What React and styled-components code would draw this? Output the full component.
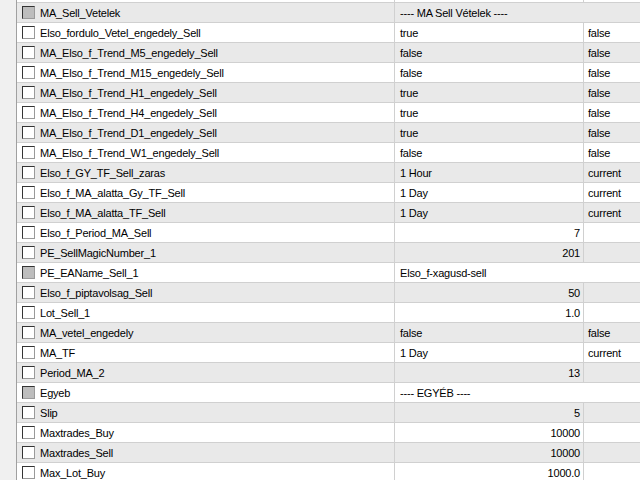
import React from "react";
import styled, { createGlobalStyle } from "styled-components";

const GlobalStyle = createGlobalStyle`
  html, body { margin: 0; padding: 0; background: #fff; }
  body {
    font-family: "Liberation Sans", Arial, sans-serif;
    font-size: 11px;
    letter-spacing: -0.2px;
    color: #000;
    overflow: hidden;
  }
`;

const Frame = styled.div`
  display: flex;
  width: 640px;
  height: 480px;
  overflow: hidden;
`;

const Gutter = styled.div`
  width: 16px;
  flex: none;
  background: #f0f0f0;
  border-right: 1px solid #a0a0a0;
`;

const Grid = styled.div`
  flex: 1;
  display: flex;
  flex-direction: column;
`;

const TopCut = styled.div`
  height: 2px;
  flex: none;
  background: #fff;
  display: flex;
`;

const TopCutCell = styled.div`
  width: ${(p) => p.$w}px;
  flex: ${(p) => (p.$w ? "none" : "1")};
  border-right: ${(p) => (p.$w ? "1px solid #d0d0d0" : "0")};
`;

const Row = styled.div`
  height: 19px;
  flex: none;
  display: flex;
  border-top: 1px solid #d0d0d0;
  background: ${(p) => (p.$alt ? "#e9e9e9" : "#fff")};
`;

const NameCell = styled.div`
  width: 372px;
  flex: none;
  display: flex;
  align-items: center;
  gap: 5px;
  padding: 1px 0 0 5px;
  border-right: 1px solid #d0d0d0;
  white-space: nowrap;
`;

const Check = styled.span`
  width: 11px;
  height: 11px;
  flex: none;
  margin-top: -1px;
  border: 1px solid;
  border-color: #333 #9a9a9a #9a9a9a #333;
  background: ${(p) => (p.$group ? "#bdbdbd" : "#fff")};
`;

const ValueCell = styled.div`
  width: ${(p) => (p.$span ? "auto" : "180px")};
  flex: ${(p) => (p.$span ? "1" : "none")};
  display: flex;
  align-items: center;
  justify-content: ${(p) => (p.$num ? "flex-end" : "flex-start")};
  padding: 1px 3px 0 5px;
  border-right: ${(p) => (p.$span ? "0" : "1px solid #d0d0d0")};
  white-space: nowrap;
`;

const StepCell = styled.div`
  flex: 1;
  display: flex;
  align-items: center;
  padding: 1px 0 0 4px;
  white-space: nowrap;
`;

const rows = [
  { name: "MA_Sell_Vetelek", value: "---- MA Sell Vételek ----", group: true },
  { name: "Elso_fordulo_Vetel_engedely_Sell", value: "true", step: "false" },
  { name: "MA_Elso_f_Trend_M5_engedely_Sell", value: "false", step: "false" },
  { name: "MA_Elso_f_Trend_M15_engedely_Sell", value: "false", step: "false" },
  { name: "MA_Elso_f_Trend_H1_engedely_Sell", value: "true", step: "false" },
  { name: "MA_Elso_f_Trend_H4_engedely_Sell", value: "true", step: "false" },
  { name: "MA_Elso_f_Trend_D1_engedely_Sell", value: "true", step: "false" },
  { name: "MA_Elso_f_Trend_W1_engedely_Sell", value: "false", step: "false" },
  { name: "Elso_f_GY_TF_Sell_zaras", value: "1 Hour", step: "current" },
  { name: "Elso_f_MA_alatta_Gy_TF_Sell", value: "1 Day", step: "current" },
  { name: "Elso_f_MA_alatta_TF_Sell", value: "1 Day", step: "current" },
  { name: "Elso_f_Period_MA_Sell", value: "7", num: true, step: "" },
  { name: "PE_SellMagicNumber_1", value: "201", num: true, step: "" },
  { name: "PE_EAName_Sell_1", value: "Elso_f-xagusd-sell", group: true },
  { name: "Elso_f_piptavolsag_Sell", value: "50", num: true, step: "" },
  { name: "Lot_Sell_1", value: "1.0", num: true, step: "" },
  { name: "MA_vetel_engedely", value: "false", step: "false" },
  { name: "MA_TF", value: "1 Day", step: "current" },
  { name: "Period_MA_2", value: "13", num: true, step: "" },
  { name: "Egyeb", value: "---- EGYÉB ----", group: true },
  { name: "Slip", value: "5", num: true, step: "" },
  { name: "Maxtrades_Buy", value: "10000", num: true, step: "" },
  { name: "Maxtrades_Sell", value: "10000", num: true, step: "" },
  { name: "Max_Lot_Buy", value: "1000.0", num: true, step: "" },
];

export default function App() {
  return (
    <Frame>
      <GlobalStyle />
      <Gutter />
      <Grid>
        <TopCut>
          <TopCutCell $w={377} />
          <TopCutCell $w={188} />
          <TopCutCell />
        </TopCut>
        {rows.map((r, i) => (
          <Row key={r.name} $alt={i % 2 === 0}>
            <NameCell>
              <Check $group={r.group} />
              <span>{r.name}</span>
            </NameCell>
            <ValueCell $span={r.group} $num={r.num}>
              {r.value}
            </ValueCell>
            {!r.group && <StepCell>{r.step}</StepCell>}
          </Row>
        ))}
      </Grid>
    </Frame>
  );
}
